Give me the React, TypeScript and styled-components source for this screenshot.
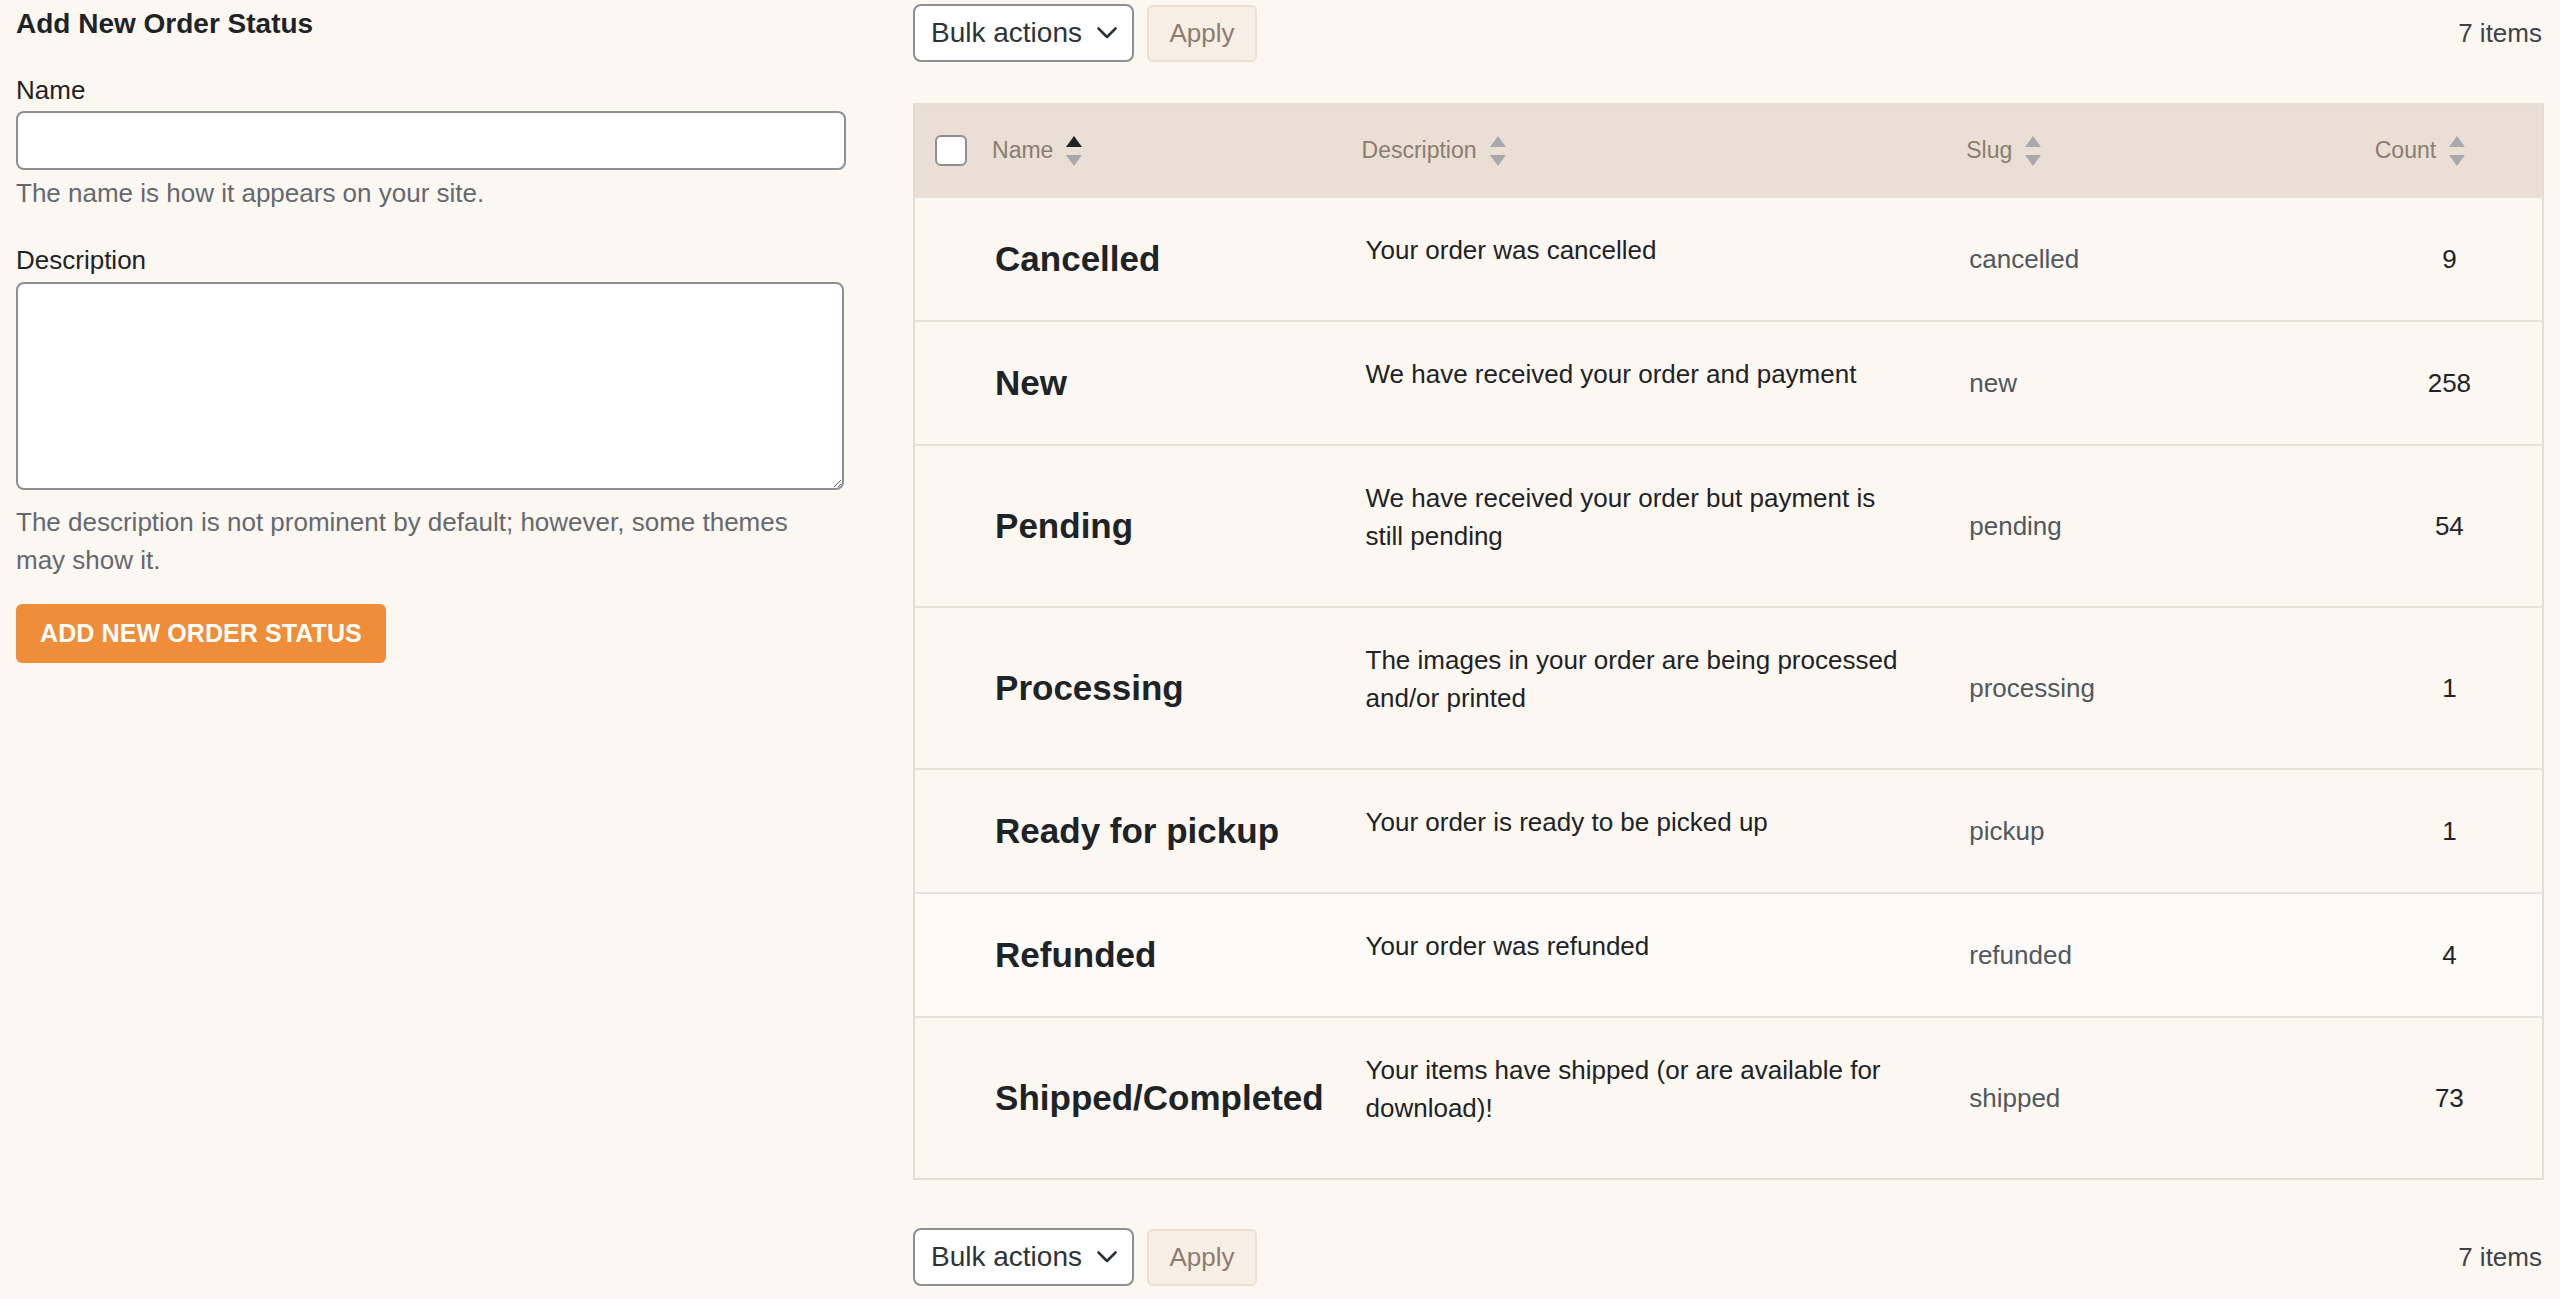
import React from "react";
import styled, { createGlobalStyle } from "styled-components";

const GlobalStyle = createGlobalStyle`
  html, body { margin: 0; padding: 0; background: #fcf7f1; }
  body { font-family: "Liberation Sans", Arial, sans-serif; color: #1d2327; }
  * { box-sizing: border-box; }
`;

const Page = styled.div`
  display: grid;
  grid-template-columns: 830px 1fr;
  column-gap: 67px;
  padding: 0 16px 0 16px;
  min-height: 1299px;
  background: #fcf7f1;
`;

const LeftCol = styled.div`
  display: flex;
  flex-direction: column;
  padding-top: 6px;
`;

const Title = styled.h2`
  margin: 0;
  font-size: 28px;
  line-height: 36px;
  font-weight: 700;
  color: #1d2327;
`;

const Label = styled.label<{ $top: number }>`
  display: block;
  margin-top: ${(p) => p.$top}px;
  font-size: 26px;
  line-height: 36px;
  color: #1d2327;
`;

const TextInput = styled.input`
  display: block;
  margin-top: 3px;
  width: 830px;
  height: 59px;
  border: 2px solid #8c8f94;
  border-radius: 8px;
  background: #fff;
  font-size: 26px;
  padding: 0 16px;
  font-family: inherit;
`;

const TextArea = styled.textarea`
  display: block;
  margin-top: 4px;
  width: 828px;
  height: 208px;
  border: 2px solid #8c8f94;
  border-radius: 8px;
  background: #fff;
  font-size: 26px;
  padding: 8px 16px;
  font-family: inherit;
`;

const Help = styled.p<{ $top: number }>`
  margin: ${(p) => p.$top}px 0 0;
  max-width: 815px;
  font-size: 26px;
  line-height: 38px;
  color: #646970;
`;

const PrimaryButton = styled.button`
  align-self: flex-start;
  margin-top: 25px;
  height: 59px;
  padding: 0 24px;
  border: none;
  border-radius: 6px;
  background: #ef8d39;
  color: #fff;
  font-family: inherit;
  font-weight: 700;
  font-size: 25px;
  letter-spacing: 0.1px;
`;

const RightCol = styled.div`
  display: flex;
  flex-direction: column;
  padding-top: 4px;
`;

const Toolbar = styled.div<{ $top?: number }>`
  display: flex;
  align-items: center;
  gap: 13px;
  height: 58px;
  margin-top: ${(p) => p.$top ?? 0}px;
`;

const SelectBox = styled.div`
  display: flex;
  align-items: center;
  justify-content: space-between;
  width: 221px;
  height: 58px;
  padding: 0 15px 0 16px;
  border: 2px solid #8c8f94;
  border-radius: 8px;
  background: #fff;
  font-size: 28px;
  color: #2c3338;
`;

const ApplyButton = styled.button`
  width: 110px;
  height: 57px;
  border: 2px solid #ebdfd2;
  border-radius: 6px;
  background: #f7eee5;
  color: #8b7d6f;
  font-family: inherit;
  font-size: 26px;
`;

const ItemCount = styled.span`
  margin-left: auto;
  padding-right: 2px;
  font-size: 26px;
  color: #3c434a;
`;

const Table = styled.table`
  margin-top: 41px;
  width: 100%;
  table-layout: fixed;
  border-collapse: collapse;
  border: 2px solid #e4ddd4;
`;

const HeadRow = styled.tr`
  background: #e9dfd5;
  height: 93px;
`;

const Th = styled.th<{ $pl?: number }>`
  text-align: left;
  vertical-align: middle;
  font-weight: 400;
  font-size: 23px;
  color: #8b7d6f;
  padding: 0 0 0 ${(p) => p.$pl ?? 18}px;
`;

const SortLabel = styled.span`
  display: inline-flex;
  align-items: center;
  gap: 13px;
`;

const Checkbox = styled.span`
  display: block;
  width: 32px;
  height: 31px;
  border: 2px solid #8c8f94;
  border-radius: 6px;
  background: #fff;
`;

const BodyRow = styled.tr<{ $hl?: boolean }>`
  background: ${(p) => (p.$hl ? "#fdfbf8" : "#fcf7f1")};
  border-top: 2px solid #e7e1d9;
`;

const Td = styled.td`
  vertical-align: middle;
  padding: 33px 0 33px 21px;
  font-size: 26px;
  line-height: 38px;
`;

const NameCell = styled(Td)`
  font-size: 35px;
  line-height: 44px;
  font-weight: 700;
  color: #1d2327;
`;

const DescCell = styled(Td)`
  padding: 33px 37px 51px 21px;
  color: #1d2327;
`;

const SlugCell = styled(Td)`
  color: #50575e;
`;

const CountCell = styled(Td)`
  padding-left: 0;
  text-align: center;
  color: #1d2327;
`;

const SortArrows = ({ active }: { active?: boolean }) => (
  <svg width="16" height="30" viewBox="0 0 16 30">
    <polygon points="8,0 16,11 0,11" fill={active ? "#1d2327" : "#a7a9ac"} />
    <polygon points="0,19 16,19 8,30" fill="#a7a9ac" />
  </svg>
);

const Chevron = () => (
  <svg width="20" height="12" viewBox="0 0 20 12">
    <polyline points="1.5,1.5 10,10 18.5,1.5" fill="none" stroke="#2c3338" strokeWidth="2.6" strokeLinecap="round" strokeLinejoin="round" />
  </svg>
);

const rows = [
  { name: "Cancelled", desc: "Your order was cancelled", slug: "cancelled", count: 9 },
  { name: "New", desc: "We have received your order and payment", slug: "new", count: 258 },
  { name: "Pending", desc: "We have received your order but payment is still pending", slug: "pending", count: 54 },
  { name: "Processing", desc: "The images in your order are being processed and/or printed", slug: "processing", count: 1 },
  { name: "Ready for pickup", desc: "Your order is ready to be picked up", slug: "pickup", count: 1 },
  { name: "Refunded", desc: "Your order was refunded", slug: "refunded", count: 4, hl: true },
  { name: "Shipped/Completed", desc: "Your items have shipped (or are available for download)!", slug: "shipped", count: 73 },
];

const BulkBar = ({ top }: { top?: number }) => (
  <Toolbar $top={top}>
    <SelectBox>
      <span>Bulk actions</span>
      <Chevron />
    </SelectBox>
    <ApplyButton>Apply</ApplyButton>
    <ItemCount>7 items</ItemCount>
  </Toolbar>
);

export default function App() {
  return (
    <>
      <GlobalStyle />
      <Page>
        <LeftCol>
          <Title>Add New Order Status</Title>
          <Label $top={30}>Name</Label>
          <TextInput type="text" />
          <Help $top={4}>The name is how it appears on your site.</Help>
          <Label $top={30}>Description</Label>
          <TextArea />
          <Help $top={13}>
            The description is not prominent by default; however, some themes may show it.
          </Help>
          <PrimaryButton>ADD NEW ORDER STATUS</PrimaryButton>
        </LeftCol>
        <RightCol>
          <BulkBar />
          <Table>
            <colgroup>
              <col style={{ width: 60 }} />
              <col style={{ width: 370 }} />
              <col style={{ width: 603 }} />
              <col style={{ width: 408 }} />
              <col style={{ width: 186 }} />
            </colgroup>
            <thead>
              <HeadRow>
                <Th $pl={20}>
                  <Checkbox />
                </Th>
                <Th>
                  <SortLabel>
                    Name <SortArrows active />
                  </SortLabel>
                </Th>
                <Th $pl={17}>
                  <SortLabel>
                    Description <SortArrows />
                  </SortLabel>
                </Th>
                <Th>
                  <SortLabel>
                    Slug <SortArrows />
                  </SortLabel>
                </Th>
                <Th>
                  <SortLabel>
                    Count <SortArrows />
                  </SortLabel>
                </Th>
              </HeadRow>
            </thead>
            <tbody>
              {rows.map((r) => (
                <BodyRow key={r.slug} $hl={r.hl}>
                  <Td />
                  <NameCell>{r.name}</NameCell>
                  <DescCell>{r.desc}</DescCell>
                  <SlugCell>{r.slug}</SlugCell>
                  <CountCell>{r.count}</CountCell>
                </BodyRow>
              ))}
            </tbody>
          </Table>
          <BulkBar top={48} />
        </RightCol>
      </Page>
    </>
  );
}
